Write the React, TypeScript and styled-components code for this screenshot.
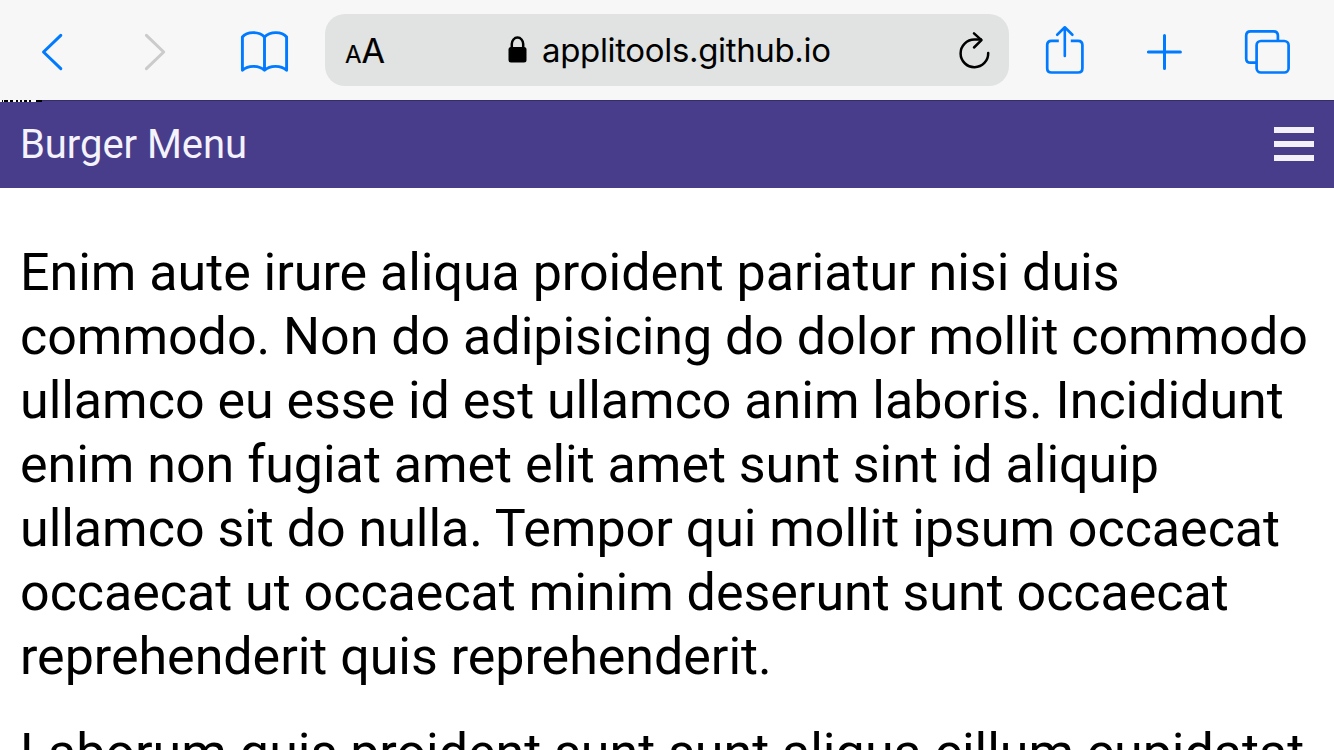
import React from "react";
import styled, { createGlobalStyle } from "styled-components";

const blue = "#007aff";

const GlobalStyle = createGlobalStyle`
  * { box-sizing: border-box; }
  html, body { margin: 0; background: #fff; overflow: hidden; }
`;

const Screen = styled.div`
  width: 1334px;
  height: 750px;
  overflow: hidden;
  display: flex;
  flex-direction: column;
  font-family: Roboto, sans-serif;
  color: #000;
`;

const Toolbar = styled.header`
  flex: none;
  height: 100px;
  padding-top: 14px;
  display: flex;
  align-items: flex-start;
  background: #f7f7f7;
`;

const ToolButton = styled.button<{ $width: number; $color?: string }>`
  flex: none;
  width: ${(p) => p.$width}px;
  height: 72px;
  padding: 0;
  border: 0;
  background: none;
  color: ${(p) => p.$color ?? blue};
  svg { display: block; }
`;

const AddressBar = styled.div`
  flex: none;
  width: 684px;
  height: 72px;
  padding: 0 18px 0 20px;
  display: flex;
  align-items: center;
  border-radius: 20px;
  background: #e1e3e2;
`;

const TextSize = styled.span`
  width: 162px;
  padding-top: 6px;
  font-family: Inter, sans-serif;
  font-size: 34px;
  line-height: 40px;
  -webkit-text-stroke: 0.2px #000;
  small { font-size: 24px; }
`;

const Address = styled.div`
  flex: 1;
  display: flex;
  align-items: center;
  gap: 15px;
  font-family: Inter, sans-serif;
  font-size: 33px;
  line-height: 40px;
  letter-spacing: -0.34px;
`;

const Host = styled.span`
  white-space: nowrap;
`;

const PageHeader = styled.div`
  flex: none;
  height: 88px;
  padding: 0 20px;
  display: flex;
  align-items: center;
  justify-content: space-between;
  position: relative;
  background: #483d8b;
  box-shadow: inset 0 1px 0 #352d63;
`;

const Title = styled.h1`
  margin: 0;
  padding-top: 2px;
  font-size: 40px;
  font-weight: 400;
  line-height: 48px;
  letter-spacing: -0.06px;
  color: #f4f2fb;
`;

const SkipLink = styled.a`
  position: absolute;
  left: 0;
  top: 0;
  width: 42px;
  height: 2px;
  overflow: hidden;
  background: #000;
  svg { display: block; }
`;

const Burger = styled.button`
  width: 40px;
  padding: 0;
  border: 0;
  background: none;
  display: flex;
  flex-direction: column;
  gap: 8px;
`;

const Bar = styled.span`
  height: 6px;
  background: #f4f0fa;
`;

const Content = styled.main`
  padding: 53px 20px 0;
`;

const Paragraph = styled.p`
  margin: 0 0 32px;
  font-size: 52px;
  line-height: 64px;
  letter-spacing: -0.03px;
  white-space: nowrap;
`;

const strokeProps = {
  fill: "none",
  stroke: "currentColor",
  strokeLinecap: "round" as const,
  strokeLinejoin: "round" as const,
};

const enim = [
  "Enim aute irure aliqua proident pariatur nisi duis",
  "commodo. Non do adipisicing do dolor mollit commodo",
  "ullamco eu esse id est ullamco anim laboris. Incididunt",
  "enim non fugiat amet elit amet sunt sint id aliquip",
  "ullamco sit do nulla. Tempor qui mollit ipsum occaecat",
  "occaecat ut occaecat minim deserunt sunt occaecat",
  "reprehenderit quis reprehenderit.",
];

export default function App() {
  return (
    <Screen>
      <GlobalStyle />
      <Toolbar>
        <ToolButton $width={104} aria-label="Back">
          <svg width="104" height="72" viewBox="0 14 104 72" {...strokeProps} strokeWidth="3">
            <path d="M60.8 35.4 43.5 52 60.8 68.6" />
          </svg>
        </ToolButton>
        <ToolButton $width={104} $color="#cbcbcb" aria-label="Forward">
          <svg width="104" height="72" viewBox="104 14 104 72" {...strokeProps} strokeWidth="3">
            <path d="M146.4 35.4 163.7 52 146.4 68.6" />
          </svg>
        </ToolButton>
        <ToolButton $width={117} aria-label="Bookmarks">
          <svg width="117" height="72" viewBox="208 14 117 72" {...strokeProps} strokeWidth="2.9">
            <path d="M264.5 37C259 31.2 247 31.2 242.4 37V70.3C248 65 259 65 264.5 70.3C270 65 281 65 286.6 70.3V37C282 31.2 270 31.2 264.5 37V70" />
          </svg>
        </ToolButton>
        <AddressBar>
          <TextSize><small>A</small>A</TextSize>
          <Address>
            <svg width="20" height="28" viewBox="0 0 20 28">
              <rect x="1.5" y="11" width="18" height="15.5" rx="2.5" />
              <path d="M4.8 12V8A5.7 6.4 0 0 1 16.2 8V12" fill="none" stroke="#000" strokeWidth="2.5" />
            </svg>
            <Host>applitools.github.io</Host>
          </Address>
          <svg width="34" height="40" viewBox="957 30 34 40" {...strokeProps} strokeWidth="2.5">
            <path d="M988.2 53A13.8 13.8 0 1 1 974.5 39.6H981" />
            <path d="M974 33.3 981.5 40.2 974 47.5" />
          </svg>
        </AddressBar>
        <ToolButton $width={111} aria-label="Share">
          <svg width="111" height="72" viewBox="1009 14 111 72" {...strokeProps} strokeWidth="2.7">
            <path d="M1058.8 40.8H1051.5Q1047.2 40.8 1047.2 45.1V68.2Q1047.2 72.5 1051.5 72.5H1078.1Q1082.4 72.5 1082.4 68.2V45.1Q1082.4 40.8 1078.1 40.8H1070.8" strokeLinecap="butt" />
            <path d="M1064.8 56V28M1057.2 34.8 1064.8 27.3 1072.4 34.8" strokeWidth="2.6" />
          </svg>
        </ToolButton>
        <ToolButton $width={90} aria-label="New tab">
          <svg width="90" height="72" viewBox="1120 14 90 72" {...strokeProps} strokeWidth="3">
            <path d="M1148.4 52H1180.4M1164.5 35.6V68.4" />
          </svg>
        </ToolButton>
        <ToolButton $width={124} aria-label="Tabs">
          <svg width="124" height="72" viewBox="1210 14 124 72" {...strokeProps} strokeWidth="2.7">
            <path d="M1256 62.7H1250.5Q1246.2 62.7 1246.2 58.4V35.6Q1246.2 31.3 1250.5 31.3H1273.6Q1277.9 31.3 1277.9 35.6V40.5" strokeLinecap="butt" />
            <rect x="1256.6" y="41" width="32" height="31.5" rx="4.3" />
          </svg>
        </ToolButton>
      </Toolbar>
      <PageHeader>
        <SkipLink aria-label="Skip navigation">
          <svg width="42" height="2" viewBox="0 0 42 2" stroke="#fff" strokeWidth="2">
            <path d="M0 1H2M3 1H4M8 1H10M13 1H16M18 1H20M22 1H24M27 1H29M31 1H36" />
          </svg>
        </SkipLink>
        <Title>Burger Menu</Title>
        <Burger aria-label="Open menu">
          <Bar />
          <Bar />
          <Bar />
        </Burger>
      </PageHeader>
      <Content>
        <Paragraph>
          {enim.map((line) => (
            <React.Fragment key={line}>
              {line}
              <br />
            </React.Fragment>
          ))}
        </Paragraph>
        <Paragraph>Laborum quis proident sunt sunt aliqua cillum cupidatat</Paragraph>
      </Content>
    </Screen>
  );
}
